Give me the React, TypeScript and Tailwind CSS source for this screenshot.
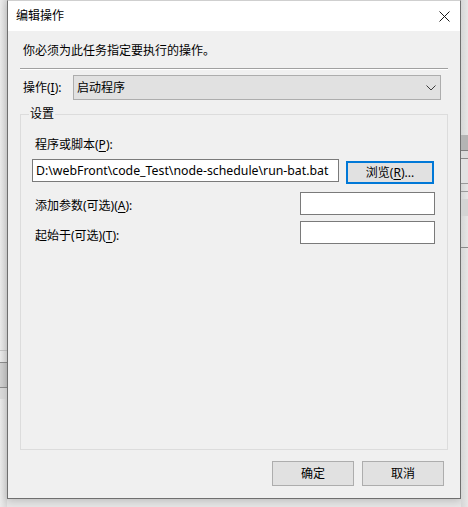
import React from 'react';

const font = "font-['Noto_Sans','Noto_Sans_CJK_SC',sans-serif]";

function Key({ k }: { k: string }) {
  return <span className="underline underline-offset-2">{k}</span>;
}

function WinButton({ children, primary }: { children: React.ReactNode; primary?: boolean }) {
  return (
    <div
      className={`flex items-center justify-center bg-[#e1e1e1] text-[12px] leading-[16px] text-black ${
        primary ? 'border-2 border-[#0078d7]' : 'border border-[#adadad]'
      }`}
    >
      {children}
    </div>
  );
}

function TextBox({ value, className }: { value?: string; className: string }) {
  return (
    <div className={`flex items-center bg-white border border-[#7a7a7a] px-[3px] text-[12.3px] text-black whitespace-nowrap overflow-hidden ${className}`}>
      {value}
    </div>
  );
}

function LeftStrip() {
  return (
    <div className="w-[7px] h-full flex flex-col bg-gradient-to-r from-[#ebebeb] to-[#d9d9d9]">
      <div className="h-[350px]" />
      <div className="h-px bg-[#c4c4c4]" />
      <div className="h-[11px]" />
      <div className="h-px bg-[#8c8c8c]" />
      <div className="h-[24px] bg-gradient-to-r from-[#d2d2d2] to-[#c4c4c4]" />
      <div className="h-px bg-[#8c8c8c]" />
      <div className="h-[11px] bg-[#dadada]" />
    </div>
  );
}

function RightStrip() {
  return (
    <div className="w-[7px] h-full flex flex-col bg-gradient-to-r from-[#d6d6d6] to-[#e6e6e6]">
      <div className="h-[135px]" />
      <div className="h-[15px] bg-[#b4b4b4]" />
      <div className="h-px bg-[#7e7e7e]" />
      <div className="h-[7px] bg-[#dcdcdc]" />
      <div className="h-px bg-[#8a8a8a]" />
      <div className="h-[24px] bg-[#e2e2e2]" />
      <div className="h-px bg-[#9a9a9a]" />
      <div className="h-[7px]" />
      <div className="h-px bg-[#9a9a9a]" />
      <div className="h-[7px]" />
      <div className="h-[17px] bg-[#d4d4d4]" />
      <div className="h-[31px]" />
      <div className="h-px bg-[#8a8a8a]" />
    </div>
  );
}

export default function App() {
  return (
    <div className={`w-[468px] h-[507px] flex bg-[#e6e6e6] overflow-hidden ${font}`}>
      <LeftStrip />
      <div className="w-[454px] h-[499px] flex flex-col border-x border-b border-t border-x-[#6f6f6f] border-b-[#6f6f6f] border-t-[#cfcfcf] shadow-[0_2px_8px_rgba(0,0,0,0.18)]">
        {/* title bar */}
        <div className="h-[30px] shrink-0 bg-white flex items-center justify-between pl-[8px] pr-[10px]">
          <span className="text-[12px] leading-[16px] text-black">编辑操作</span>
          <svg width="11" height="11" viewBox="0 0 11 11" className="mt-[1px]">
            <path d="M0.5 0.5 L10.5 10.5 M10.5 0.5 L0.5 10.5" stroke="#1a1a1a" strokeWidth="1" fill="none" />
          </svg>
        </div>

        {/* body */}
        <div className="flex-1 flex flex-col bg-[#f0f0f0] text-[12px] leading-[16px] text-black">
          <div className="mt-[12px] pl-[15px]">你必须为此任务指定要执行的操作。</div>
          <div className="mt-[9px] mx-[12px] h-[2px] border-t border-t-[#a0a0a0] border-b border-b-white" />

          <div className="mt-[5px] flex items-center pl-[15px]">
            <span className="w-[50px]">
              操作(<Key k="I" />):
            </span>
            <div className="w-[368px] h-[25px] flex items-center justify-between bg-[#e1e1e1] border border-[#adadad] pl-[3px] pr-[4px]">
              <span>启动程序</span>
              <svg width="10" height="6" viewBox="0 0 10 6">
                <polyline points="0.5,0.5 5,5 9.5,0.5" stroke="#3c3c3c" strokeWidth="1" fill="none" />
              </svg>
            </div>
          </div>

          {/* group box */}
          <div className="relative mt-[14px] mx-[12px] flex-1 border border-[#dcdcdc] flex flex-col">
            <span className="absolute -top-[9px] left-[8px] px-[1px] bg-[#f0f0f0]">设置</span>

            <div className="mt-[22px] pl-[14px]">
              程序或脚本(<Key k="P" />):
            </div>
            <div className="mt-[6px] pl-[11px] flex items-start gap-[7px] h-[25px]">
              <TextBox className="w-[307px] h-[23px]" value="D:\webFront\code_Test\node-schedule\run-bat.bat" />
              <div className="mt-[2px] w-[88px] h-[23px] flex">
                <div className="flex-1">
                  <WinButton primary>
                    <span className="h-[19px] flex items-center">
                      浏览(<Key k="R" />)...
                    </span>
                  </WinButton>
                </div>
              </div>
            </div>

            <div className="mt-[8px] pl-[14px] pr-[12px] flex items-start justify-between">
              <span className="mt-[6px]">
                添加参数(可选)(<Key k="A" />):
              </span>
              <TextBox className="w-[135px] h-[23px]" />
            </div>

            <div className="mt-[6px] pl-[14px] pr-[12px] flex items-start justify-between">
              <span className="mt-[7px]">
                起始于(可选)(<Key k="T" />):
              </span>
              <TextBox className="w-[135px] h-[23px]" />
            </div>
          </div>

          <div className="mt-[11px] mb-[12px] pr-[16px] flex justify-end gap-[8px]">
            <div className="w-[82px] h-[25px] flex flex-col">
              <WinButton>
                <span className="h-[23px] flex items-center">确定</span>
              </WinButton>
            </div>
            <div className="w-[82px] h-[25px] flex flex-col">
              <WinButton>
                <span className="h-[23px] flex items-center">取消</span>
              </WinButton>
            </div>
          </div>
        </div>
      </div>
      <RightStrip />
    </div>
  );
}
